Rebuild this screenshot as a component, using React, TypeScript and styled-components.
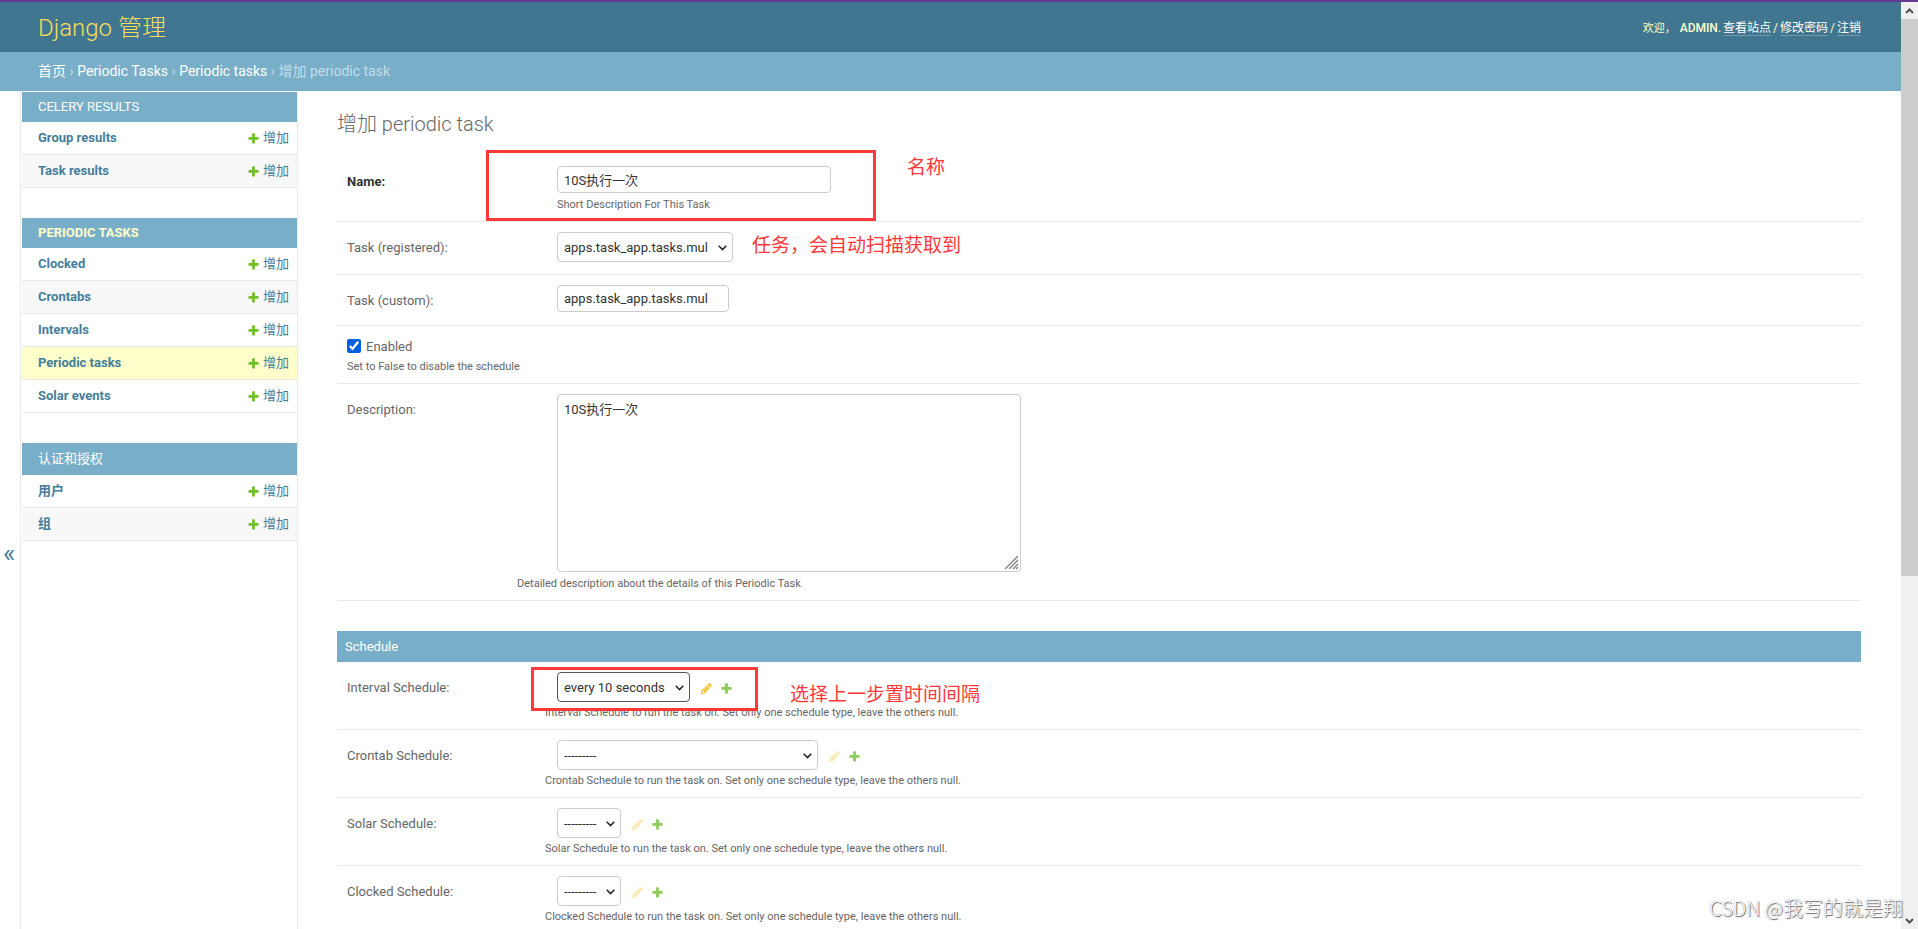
import React from "react";
import styled, { createGlobalStyle, css } from "styled-components";

const font = `Roboto, "Noto Sans CJK SC", sans-serif`;

const GlobalStyle = createGlobalStyle`
  *, *::before, *::after { box-sizing: border-box; }
  body {
    margin: 0;
    background: #fff;
    color: #333;
    font-family: ${font};
    font-size: 13px;
    overflow: hidden;
  }
  h1, h2, p { margin: 0; font-weight: 400; }
  a { text-decoration: none; color: #447e9b; }
  input, select, textarea, button { font-family: inherit; margin: 0; }
`;

/* ---------- shell ---------- */

const Shell = styled.div`
  display: flex;
  height: 100vh;
  border-top: 2px solid #663b96;
  overflow: hidden;
  position: relative;
`;

const Page = styled.div`
  flex: 1;
  min-width: 0;
  display: flex;
  flex-direction: column;
  overflow: hidden;
`;

const Header = styled.header`
  flex: none;
  display: flex;
  align-items: center;
  justify-content: space-between;
  height: 50px;
  padding: 0 40px 0 38px;
  background: #417690;
`;

const Branding = styled.h1`
  padding-top: 2px;
  font-size: 24px;
  font-weight: 300;
  line-height: 30px;
  a { color: #f5dd5d; }
`;

const UserTools = styled.div`
  display: flex;
  align-items: baseline;
  gap: 2px;
  padding-top: 2px;
  font-size: 12px;
  line-height: 14px;
  color: #ffc;
  strong { font-weight: 500; margin-left: 2px; }
  a { color: #fff; border-bottom: 1px solid rgba(255, 255, 255, 0.25); }
`;

const Welcome = styled.span`
  font-size: 11px;
`;

const Breadcrumbs = styled.nav`
  flex: none;
  height: 39px;
  padding: 0 38px;
  background: #79aec8;
  color: #c4dce8;
  font-size: 14px;
  line-height: 39px;
  a { color: #fff; }
`;

const Body = styled.div`
  flex: 1;
  min-height: 0;
  display: flex;
  align-items: flex-start;
  overflow: hidden;
`;

/* ---------- sidebar ---------- */

const NavToggle = styled.button`
  flex: none;
  width: 21px;
  height: 100vh;
  padding: 0 2px 6px 0;
  border: 0;
  border-right: 1px solid #eaeaea;
  background: #fff;
  color: #447e9b;
  font-size: 26px;
`;

const Sidebar = styled.nav`
  flex: none;
  width: 277px;
  min-height: 100vh;
  padding: 1px 0 0 1px;
  border-right: 1px solid #eaeaea;
`;

const Module = styled.table`
  width: 100%;
  margin-bottom: 30px;
  border-collapse: separate;
  border-spacing: 0;
`;

const Caption = styled.caption<{ $current?: boolean; $tall?: boolean }>`
  height: ${(p) => (p.$tall ? 32 : 30)}px;
  padding: 0 16px;
  background: #79aec8;
  text-align: left;
  line-height: ${(p) => (p.$tall ? 32 : 30)}px;
  font-weight: ${(p) => (p.$current ? 700 : 400)};
  text-transform: uppercase;
  a { color: ${(p) => (p.$current ? "#ffc" : "#fff")}; }
`;

const ModelRow = styled.tr<{ $current?: boolean }>`
  background: #fff;
  &:nth-child(even) { background: #f8f8f8; }
  ${(p) => p.$current && css`&&& { background: #ffc; }`}
  th, td { height: 33px; border-bottom: 1px solid #eaeaea; line-height: 16px; }
  th { padding: 0 16px; text-align: left; font-weight: 700; }
  td { padding: 0 8px 0 0; }
`;

const AddLink = styled.a`
  display: flex;
  align-items: center;
  justify-content: flex-end;
  gap: 3px;
`;

/* ---------- main column ---------- */

const Main = styled.main`
  flex: 1;
  min-width: 0;
  padding: 21px 40px 0 39px;
`;

const Title = styled.h1`
  margin-bottom: 20px;
  color: #666;
  font-size: 20px;
  font-weight: 300;
  line-height: 24px;
`;

const Fieldset = styled.fieldset`
  margin: 0 0 30px;
  padding: 0;
  border: 0;
  min-width: 0;
`;

const SectionTitle = styled.h2`
  padding: 0 8px;
  background: #79aec8;
  color: #fff;
  font-size: 13px;
  line-height: 31px;
`;

const FormRow = styled.div`
  position: relative;
  display: flex;
  padding: 10px;
  border-bottom: 1px solid #eaeaea;
`;

const CheckRow = styled(FormRow)`
  flex-direction: column;
`;

const Label = styled.label<{ $required?: boolean }>`
  flex: none;
  width: 210px;
  line-height: 31px;
  height: 30px;
  color: ${(p) => (p.$required ? "#333" : "#666")};
  font-weight: ${(p) => (p.$required ? 700 : 400)};
`;

const CheckLabel = styled.label`
  display: flex;
  align-items: center;
  gap: 5px;
  height: 20px;
  color: #666;
`;

const CheckBox = styled.input`
  width: 14px;
  height: 14px;
  accent-color: #0060df;
`;

const Field = styled.div`
  min-width: 0;
`;

const ControlLine = styled.div`
  display: flex;
  align-items: center;
`;

const control = css`
  display: block;
  border: 1px solid #ccc;
  border-radius: 4px;
  background: #fff;
  color: #333;
  font-size: 13px;
`;

const TextInput = styled.input<{ $width: number }>`
  ${control}
  width: ${(p) => p.$width}px;
  height: 27px;
  padding: 0 6px;
`;

const SelectBox = styled.div<{ $width: number; $focused?: boolean }>`
  position: relative;
  width: ${(p) => p.$width}px;
  height: 30px;
  select {
    ${control}
    appearance: none;
    width: 100%;
    height: 100%;
    padding: 0 6px;
    border-color: ${(p) => (p.$focused ? "#555" : "#ccc")};
    outline: none;
  }
  svg {
    position: absolute;
    right: 6px;
    top: 13px;
    pointer-events: none;
  }
`;

const SelectOnly = styled.div`
  padding-bottom: 2px;
`;

const TextAreaBox = styled.div`
  position: relative;
  width: 464px;
  height: 178px;
  textarea {
    ${control}
    width: 100%;
    height: 100%;
    padding: 6px;
    line-height: 17px;
    resize: none;
  }
  svg {
    position: absolute;
    right: 2px;
    bottom: 2px;
    pointer-events: none;
  }
`;

const Help = styled.p<{ $gap: number; $outdent?: number }>`
  margin: ${(p) => p.$gap}px 0 -2px ${(p) => -(p.$outdent ?? 0)}px;
  color: #666;
  font-size: 11px;
  line-height: 16px;
`;

const IconLink = styled.a<{ $opacity: number; $pencil?: boolean }>`
  display: flex;
  margin-left: ${(p) => (p.$pencil ? 10 : 7)}px;
  padding-top: 2px;
  opacity: ${(p) => p.$opacity};
`;

/* ---------- overlays ---------- */

const Frame = styled.div<{ $left: number; $top: number; $width: number; $height: number }>`
  position: absolute;
  z-index: 2;
  left: ${(p) => p.$left}px;
  top: ${(p) => p.$top}px;
  width: ${(p) => p.$width}px;
  height: ${(p) => p.$height}px;
  border: 3px solid #ff3838;
  pointer-events: none;
`;

const Note = styled.span<{ $left: number; $top: number }>`
  position: absolute;
  z-index: 2;
  left: ${(p) => p.$left}px;
  top: ${(p) => p.$top}px;
  color: #ff3838;
  font-family: "Noto Sans CJK SC", sans-serif;
  font-size: 19px;
  font-weight: 400;
  line-height: 24px;
  white-space: nowrap;
`;

const Watermark = styled.div`
  position: absolute;
  z-index: 4;
  right: 15px;
  bottom: 8px;
  color: #fff;
  font-family: "Noto Sans CJK SC", sans-serif;
  font-size: 20px;
  font-weight: 300;
  line-height: 26px;
  text-shadow: 1px 1px 1px #666, 0 0 1px #888;
`;

const ScrollTrack = styled.div`
  flex: none;
  width: 17px;
  display: flex;
  flex-direction: column;
  background: #f0f0f0;
`;

const ScrollArrow = styled.div`
  flex: none;
  height: 17px;
  display: flex;
  align-items: center;
  justify-content: center;
`;

const ScrollSpace = styled.div`
  flex: 1;
`;

const ScrollThumb = styled.div`
  height: 62.4%;
  background: #cdcdcd;
`;

/* ---------- icons ---------- */

const PlusIcon = () => (
  <svg width="13" height="13" viewBox="0 0 1792 1792" aria-hidden="true">
    <path
      fill="#70bf2b"
      d="M1600 796v192q0 40-28 68t-68 28h-416v416q0 40-28 68t-68 28h-192q-40 0-68-28t-28-68v-416h-416q-40 0-68-28t-28-68v-192q0-40 28-68t68-28h416v-416q0-40 28-68t68-28h192q40 0 68 28t28 68v416h416q40 0 68 28t28 68z"
    />
  </svg>
);

const PencilIcon = () => (
  <svg width="13" height="13" viewBox="0 0 1792 1792" aria-hidden="true">
    <path
      fill="#efb80b"
      d="M491 1536l91-91-235-235-91 91v107h128v128h107zm523-928q0-22-22-22-10 0-17 7l-542 542q-7 7-7 17 0 22 22 22 10 0 17-7l542-542q7-7 7-17zm-54-192l416 416-832 832h-416v-416zm683 96q0 53-37 90l-166 166-416-416 166-165q36-38 90-38 53 0 91 38l235 234q37 39 37 91z"
    />
  </svg>
);

const Chevron = ({ down }: { down?: boolean }) => (
  <svg width="9" height="6" viewBox="0 0 9 6" aria-hidden="true">
    <path d={down ? "M1 1l3.5 3.5L8 1" : "M1 5l3.5-3.5L8 5"} fill="none" stroke="#505050" strokeWidth="2" />
  </svg>
);

const SelectArrow = () => (
  <svg width="9" height="6" viewBox="0 0 9 6" aria-hidden="true">
    <path d="M.7.8l3.8 3.8L8.3.8" fill="none" stroke="#222" strokeWidth="1.5" />
  </svg>
);

const ResizeGrip = () => (
  <svg width="15" height="15" viewBox="0 0 15 15" aria-hidden="true">
    <path d="M1 14L14 1M5 14l9-9M9 14l5-5M12 14l2-2" fill="none" stroke="#808080" strokeWidth="1.3" />
  </svg>
);

/* ---------- data ---------- */

interface NavModule {
  name: string;
  current?: boolean;
  tall?: boolean;
  models: string[];
}

const modules: NavModule[] = [
  { name: "Celery Results", models: ["Group results", "Task results"] },
  {
    name: "Periodic Tasks",
    current: true,
    models: ["Clocked", "Crontabs", "Intervals", "Periodic tasks", "Solar events"],
  },
  { name: "认证和授权", tall: true, models: ["用户", "组"] },
];

const schedules = [
  { kind: "Interval", value: "every 10 seconds", width: 133, chosen: true },
  { kind: "Crontab", value: "---------", width: 261 },
  { kind: "Solar", value: "---------", width: 64 },
  { kind: "Clocked", value: "---------", width: 64 },
];

interface SelectProps {
  id: string;
  width: number;
  value: string;
  focused?: boolean;
}

const Select = ({ id, width, value, focused }: SelectProps) => (
  <SelectBox $width={width} $focused={focused}>
    <select id={id}><option>{value}</option></select>
    <SelectArrow />
  </SelectBox>
);

export default function App() {
  return (
    <>
      <GlobalStyle />
      <Shell>
        <Page>
          <Header>
            <Branding><a href="#home">Django 管理</a></Branding>
            <UserTools>
              <Welcome>欢迎，</Welcome>
              <span><strong>ADMIN</strong>.</span>
              <a href="#site">查看站点</a>
              <span>/</span>
              <a href="#password">修改密码</a>
              <span>/</span>
              <a href="#logout">注销</a>
            </UserTools>
          </Header>
          <Breadcrumbs>
            <a href="#home">首页</a> › <a href="#app">Periodic Tasks</a> › <a href="#list">Periodic tasks</a> › 增加 periodic task
          </Breadcrumbs>
          <Body>
            <NavToggle aria-label="Toggle navigation">«</NavToggle>
            <Sidebar>
              {modules.map((m) => (
                <Module key={m.name}>
                  <Caption $current={m.current} $tall={m.tall}><a href="#app">{m.name}</a></Caption>
                  <tbody>
                    {m.models.map((name) => (
                      <ModelRow key={name} $current={name === "Periodic tasks"}>
                        <th scope="row"><a href="#model">{name}</a></th>
                        <td><AddLink href="#add"><PlusIcon />增加</AddLink></td>
                      </ModelRow>
                    ))}
                  </tbody>
                </Module>
              ))}
            </Sidebar>
            <Main>
              <Title>增加 periodic task</Title>
              <Fieldset>
                <FormRow>
                  <Label htmlFor="name" $required>Name:</Label>
                  <Field>
                    <TextInput id="name" $width={274} defaultValue="10S执行一次" />
                    <Help $gap={4}>Short Description For This Task</Help>
                  </Field>
                  <Frame $left={149} $top={-6} $width={390} $height={71} />
                  <Note $left={570} $top={-2}>名称</Note>
                </FormRow>
                <FormRow>
                  <Label htmlFor="registered">Task (registered):</Label>
                  <SelectOnly>
                    <Select id="registered" width={176} value="apps.task_app.tasks.mul" />
                  </SelectOnly>
                  <Note $left={415} $top={10}>任务，会自动扫描获取到</Note>
                </FormRow>
                <FormRow>
                  <Label htmlFor="custom">Task (custom):</Label>
                  <TextInput id="custom" $width={172} defaultValue="apps.task_app.tasks.mul" />
                </FormRow>
                <CheckRow>
                  <CheckLabel><CheckBox type="checkbox" defaultChecked />Enabled</CheckLabel>
                  <Help $gap={3}>Set to False to disable the schedule</Help>
                </CheckRow>
                <FormRow>
                  <Label htmlFor="description">Description:</Label>
                  <Field>
                    <TextAreaBox>
                      <textarea id="description" defaultValue="10S执行一次" />
                      <ResizeGrip />
                    </TextAreaBox>
                    <Help $gap={4} $outdent={40}>Detailed description about the details of this Periodic Task</Help>
                  </Field>
                </FormRow>
              </Fieldset>
              <Fieldset>
                <SectionTitle>Schedule</SectionTitle>
                {schedules.map((s) => (
                  <FormRow key={s.kind}>
                    <Label htmlFor={s.kind}>{s.kind} Schedule:</Label>
                    <Field>
                      <ControlLine>
                        <Select id={s.kind} width={s.width} value={s.value} focused={s.chosen} />
                        <IconLink href="#change" aria-label="Change" $pencil $opacity={s.chosen ? 0.8 : 0.3}><PencilIcon /></IconLink>
                        <IconLink href="#add" aria-label="Add" $opacity={0.8}><PlusIcon /></IconLink>
                      </ControlLine>
                      <Help $gap={3} $outdent={12}>
                        {s.kind} Schedule to run the task on. Set only one schedule type, leave the others null.
                      </Help>
                    </Field>
                    {s.chosen && (
                      <>
                        <Frame $left={194} $top={5} $width={227} $height={44} />
                        <Note $left={453} $top={19}>选择上一步置时间间隔</Note>
                      </>
                    )}
                  </FormRow>
                ))}
              </Fieldset>
            </Main>
          </Body>
        </Page>
        <ScrollTrack aria-hidden="true">
          <ScrollArrow><Chevron /></ScrollArrow>
          <ScrollSpace><ScrollThumb /></ScrollSpace>
          <ScrollArrow><Chevron down /></ScrollArrow>
        </ScrollTrack>
        <Watermark>CSDN @我写的就是翔</Watermark>
      </Shell>
    </>
  );
}
